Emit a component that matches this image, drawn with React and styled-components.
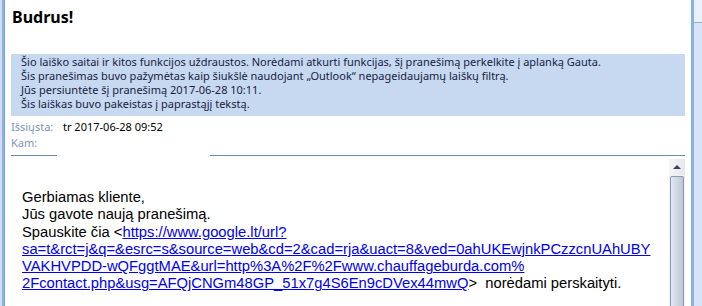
import React from 'react'
import styled, { createGlobalStyle } from 'styled-components'

const Global = createGlobalStyle`
html, body {
  margin: 0;
  padding: 0;
  background: #ffffff;
  overflow: hidden;
}
`

const Window = styled.div`
display: flex;
width: 702px;
height: 306px;
background: #ffffff;
`

const LeftFrame = styled.div`
width: 4px;
flex-shrink: 0;
background: linear-gradient(to right, #cfdff3 0, #cfdff3 2px, #8fb2e2 2px);
border-right: 1px solid #7fa3d6;
`

const RightFrame = styled.div`
width: 8px;
flex-shrink: 0;
border-left: 3px solid #8db0e0;
background: #d6e4f6;
display: flex;
flex-direction: column;
`

const RightCap = styled.div`
height: 22px;
background: #eaf1fb;
border-bottom: 1px solid #8eaedb;
`

const Main = styled.div`
flex: 1;
display: flex;
flex-direction: column;
padding: 0 6px 0 6px;
min-width: 0;
`

const Title = styled.h1`
margin: 0;
padding: 6px 0 0 1px;
height: 54px;
box-sizing: border-box;
font-family: "Noto Sans", "Open Sans", sans-serif;
font-size: 16px;
line-height: 22px;
font-weight: 700;
color: #000000;
`

const Banner = styled.div`
background: #c6d9f1;
padding: 1px 0 5px 10px;
height: 62px;
box-sizing: border-box;
font-family: "Noto Sans", "Open Sans", sans-serif;
font-size: 11px;
line-height: 14px;
color: #18223f;
`

const Meta = styled.div`
display: grid;
grid-template-columns: 52px 1fr;
padding-top: 3px;
font-family: "Noto Sans", "Open Sans", sans-serif;
font-size: 11px;
line-height: 16px;
`

const Label = styled.span`
color: #7d93bb;
`

const Value = styled.span`
color: #000000;
`

const Divider = styled.div`
display: flex;
margin-top: 4px;
height: 1px;
`

const Rule = styled.div`
height: 1px;
background: #6f8ca7;
flex: ${p => (p.$grow ? 1 : 'none')};
width: ${p => (p.$grow ? 'auto' : `${p.$w}px`)};
`

const Gap = styled.div`
width: ${p => p.$w}px;
`

const Body = styled.div`
flex: 1;
display: flex;
min-height: 0;
`

const Text = styled.div`
flex: 1;
padding: 33px 0 0 11px;
font-family: "Liberation Sans", Arial, sans-serif;
font-size: 14.75px;
line-height: 17.3px;
color: #000000;
white-space: nowrap;
`

const Link = styled.a`
color: #0000ee;
text-decoration: underline;
`

const Scrollbar = styled.div`
width: 16px;
margin-top: 3px;
display: flex;
flex-direction: column;
background: #eef0f3;
`

const ScrollButton = styled.div`
height: 16px;
box-sizing: border-box;
display: flex;
align-items: center;
justify-content: center;
background: linear-gradient(to right, #f4f5f7, #e4e7ec);
`

const Arrow = styled.div`
width: 0;
height: 0;
border-left: 4px solid transparent;
border-right: 4px solid transparent;
border-bottom: 4px solid #3b4250;
`

const Thumb = styled.div`
flex: 1;
margin: 1px 1px 0 1px;
border: 1px solid #8e9ab0;
border-bottom: none;
border-radius: 2px 2px 0 0;
background: linear-gradient(to right, #e3e8f0, #ccd4e2 60%, #bcc6d6);
`

export default function App() {
  return (
    <Window>
      <Global />
      <LeftFrame />
      <Main>
        <Title>Budrus!</Title>
        <Banner>
          Šio laiško saitai ir kitos funkcijos uždraustos. Norėdami atkurti funkcijas, šį pranešimą perkelkite į aplanką Gauta.<br />
          Šis pranešimas buvo pažymėtas kaip šiukšlė naudojant „Outlook“ nepageidaujamų laiškų filtrą.<br />
          Jūs persiuntėte šį pranešimą 2017-06-28 10:11.<br />
          Šis laiškas buvo pakeistas į paprastąjį tekstą.
        </Banner>
        <Meta>
          <Label>Išsiųsta:</Label>
          <Value>tr 2017-06-28 09:52</Value>
          <Label>Kam:</Label>
          <Value />
        </Meta>
        <Divider>
          <Rule $w={46} />
          <Gap $w={153} />
          <Rule $grow />
        </Divider>
        <Body>
          <Text>
            Gerbiamas kliente,<br />
            Jūs gavote naują pranešimą.<br />
            Spauskite čia &lt;<Link href="#">https://www.google.lt/url?<br />
            sa=t&amp;rct=j&amp;q=&amp;esrc=s&amp;source=web&amp;cd=2&amp;cad=rja&amp;uact=8&amp;ved=0ahUKEwjnkPCzzcnUAhUBY<br />
            VAKHVPDD-wQFggtMAE&amp;url=http%3A%2F%2Fwww.chauffageburda.com%<br />
            2Fcontact.php&amp;usg=AFQjCNGm48GP_51x7g4S6En9cDVex44mwQ</Link>&gt;&nbsp;&nbsp;norėdami perskaityti.
          </Text>
          <Scrollbar>
            <ScrollButton><Arrow /></ScrollButton>
            <Thumb />
          </Scrollbar>
        </Body>
      </Main>
      <RightFrame>
        <RightCap />
      </RightFrame>
    </Window>
  )
}
